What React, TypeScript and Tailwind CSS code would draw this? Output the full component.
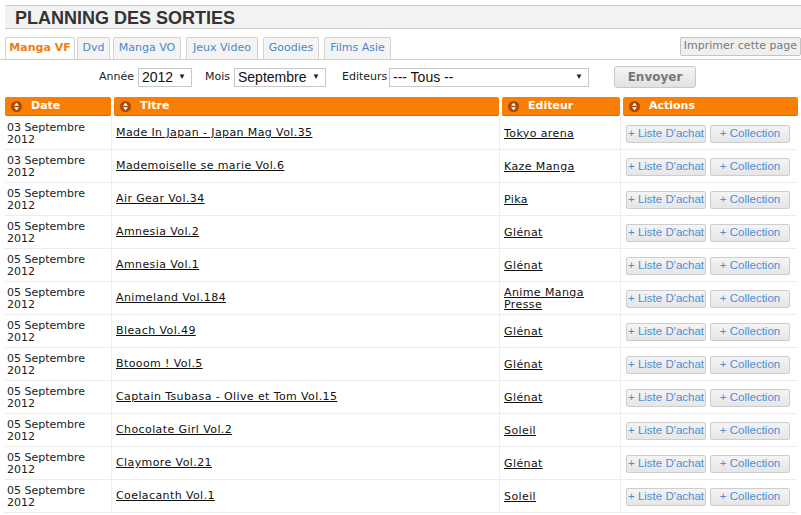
import React from "react";

const rows = [
  { date: "03 Septembre", title: "Made In Japan - Japan Mag Vol.35", editor: "Tokyo arena" },
  { date: "03 Septembre", title: "Mademoiselle se marie Vol.6", editor: "Kaze Manga" },
  { date: "05 Septembre", title: "Air Gear Vol.34", editor: "Pika" },
  { date: "05 Septembre", title: "Amnesia Vol.2", editor: "Glénat" },
  { date: "05 Septembre", title: "Amnesia Vol.1", editor: "Glénat" },
  { date: "05 Septembre", title: "Animeland Vol.184", editor: "Anime Manga\nPresse" },
  { date: "05 Septembre", title: "Bleach Vol.49", editor: "Glénat" },
  { date: "05 Septembre", title: "Btooom ! Vol.5", editor: "Glénat" },
  { date: "05 Septembre", title: "Captain Tsubasa - Olive et Tom Vol.15", editor: "Glénat" },
  { date: "05 Septembre", title: "Chocolate Girl Vol.2", editor: "Soleil" },
  { date: "05 Septembre", title: "Claymore Vol.21", editor: "Glénat" },
  { date: "05 Septembre", title: "Coelacanth Vol.1", editor: "Soleil" },
];

const tabs = [
  { label: "Manga VF", cls: "w-[70px] mr-[2px]" },
  { label: "Dvd", cls: "w-[33px] mr-[3px]" },
  { label: "Manga VO", cls: "w-[68px] mr-[5px]" },
  { label: "Jeux Video", cls: "w-[72px] mr-[5px]" },
  { label: "Goodies", cls: "w-[56px] mr-[5px]" },
  { label: "Films Asie", cls: "w-[67px]" },
];

const SortIcon = () => (
  <svg width="11" height="11" viewBox="0 0 11 11" className="shrink-0">
    <circle cx="5.5" cy="5.5" r="5.5" fill="#a94a05" />
    <path d="M5.5 1.8 L8 4.8 L3 4.8 Z" fill="#fff" />
    <path d="M5.5 9.2 L8 6.2 L3 6.2 Z" fill="#fff" />
  </svg>
);

const FakeSelect = ({ value, width }: { value: string; width: string }) => (
  <div
    className={`flex h-[19px] items-center justify-between border border-[#c8c8c8] bg-white pl-[3px] pr-[5px] text-[14px] leading-none text-[#111] ${width}`}
    style={{ fontFamily: '"Liberation Sans", Arial, sans-serif' }}
  >
    <span>{value}</span>
    <span className="text-[8px] text-[#222]">▼</span>
  </div>
);

const HeadCell = ({ label }: { label: string }) => (
  <div className="flex h-[19px] items-center gap-[9px] rounded-[2px] border-b border-[#d86a00] bg-[#f97f04] pl-[6px] pt-[1px] text-[11px] font-bold text-white">
    <SortIcon />
    <span>{label}</span>
  </div>
);

const ActionButton = ({ label }: { label: string }) => (
  <div className="flex h-[18px] w-[80px] items-center justify-center whitespace-nowrap rounded-[2px] border border-[#cdcdcd] bg-gradient-to-b from-[#f4f4f4] to-[#e6e6e6]">
    {label}
  </div>
);

export default function App() {
  return (
    <div
      className="h-[515px] w-[801px] overflow-hidden bg-white text-[11px] text-[#222]"
      style={{ fontFamily: '"DejaVu Sans", Verdana, sans-serif' }}
    >
      {/* Title bar */}
      <div className="ml-[5px] mt-[5px] flex h-[24px] items-center border-y border-[#cfcfcf] bg-[#f2f2f2] pl-[10px] pt-[1px]">
        <h1
          className="text-[18px] font-bold leading-none text-[#333]"
          style={{ fontFamily: '"Liberation Sans", Arial, sans-serif' }}
        >
          PLANNING DES SORTIES
        </h1>
      </div>

      {/* Tabs */}
      <div className="mt-[7px] flex h-[24px] items-end border-b border-[#cfcfcf] pl-[5px]">
        {tabs.map((t, i) => (
          <div
            key={t.label}
            className={`flex h-[22px] items-center justify-center rounded-t-[2px] border border-b-0 border-[#d2d2d2] ${t.cls} ${
              i === 0
                ? "bg-white font-bold text-[#f07c12]"
                : "bg-[#f4f4f4] text-[#4b88c8]"
            }`}
          >
            {t.label}
          </div>
        ))}
        <div className="mb-[3px] ml-auto flex h-[19px] items-center rounded-[2px] border border-[#c4c4c4] bg-[#efefef] px-[3px] text-[#7a7a7a]">
          Imprimer cette page
        </div>
      </div>

      {/* Filters */}
      <div className="mt-[6px] flex h-[22px] items-center pl-[99px]">
        <span className="w-[39px]">Année</span>
        <FakeSelect value="2012" width="w-[54px]" />
        <span className="ml-[13px] w-[29px]">Mois</span>
        <FakeSelect value="Septembre" width="w-[92px]" />
        <span className="ml-[16px] w-[47px]">Editeurs</span>
        <FakeSelect value="--- Tous --" width="w-[200px]" />
        <div className="ml-[25px] flex h-[22px] w-[82px] items-center justify-center rounded-[3px] border border-[#c8c8c8] bg-gradient-to-b from-[#f4f4f4] to-[#e2e2e2] text-[12px] font-bold text-[#777]">
          Envoyer
        </div>
      </div>

      {/* Table */}
      <div className="ml-[5px] mt-[9px] w-[792px]">
        <div className="grid grid-cols-[106px_385px_118px_175px] gap-x-[3px]">
          <HeadCell label="Date" />
          <HeadCell label="Titre" />
          <HeadCell label="Editeur" />
          <HeadCell label="Actions" />
        </div>
        <div className="mt-[1px]">
          {rows.map((r, i) => (
            <div
              key={i}
              className="grid h-[33px] grid-cols-[107px_388px_121px_176px] border-b border-[#ececec]"
            >
              <div className="flex flex-col justify-center border-r border-[#ececec] pl-[2px] pt-[2px] leading-[12px]">
                <span>{r.date}</span>
                <span>2012</span>
              </div>
              <div className="flex items-center border-r border-[#ececec] pl-[4px] pt-[1px]">
                <a className="tracking-[0.4px] text-[#111] underline">{r.title}</a>
              </div>
              <div className="flex items-center border-r border-[#ececec] pl-[4px] pt-[1px]">
                <a className="whitespace-pre-line leading-[12px] tracking-[0.4px] text-[#111] underline">
                  {r.editor}
                </a>
              </div>
              <div
                className="flex items-center gap-[4px] pl-[5px] pt-[1px] text-[11.5px] text-[#4b8fd6]"
                style={{ fontFamily: '"Liberation Sans", Arial, sans-serif' }}
              >
                <ActionButton label="+ Liste D'achat" />
                <ActionButton label="+ Collection" />
              </div>
            </div>
          ))}
        </div>
      </div>
    </div>
  );
}
